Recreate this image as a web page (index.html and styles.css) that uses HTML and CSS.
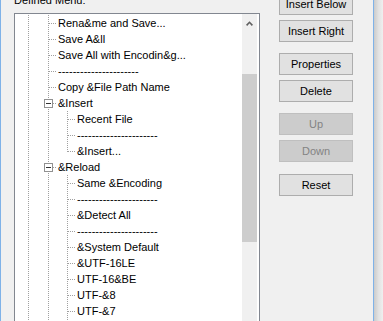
FILE: index.html
```html
<!DOCTYPE html>
<html>
<head>
<meta charset="utf-8">
<link rel="stylesheet" href="styles.css">
</head>
<body>
<div class="screen">
  <div class="window">
    <div class="left">
      <div class="label">Defined Menu:</div>
      <div class="tree">
        <div class="tree-items">
          <div class="row"><span class="a"></span><span class="b tee"></span><span class="t">Rena&amp;me and Save...</span></div>
          <div class="row"><span class="a"></span><span class="b tee"></span><span class="t">Save A&amp;ll</span></div>
          <div class="row"><span class="a"></span><span class="b tee"></span><span class="t">Save All with Encodin&amp;g...</span></div>
          <div class="row"><span class="a"></span><span class="b tee"></span><span class="t">----------------------</span></div>
          <div class="row"><span class="a"></span><span class="b tee"></span><span class="t">Copy &amp;File Path Name</span></div>
          <div class="row"><span class="a"></span><span class="b node"><span class="box"></span></span><span class="t">&amp;Insert</span></div>
          <div class="row"><span class="a"></span><span class="b pipe"></span><span class="c tee"></span><span class="t">Recent File</span></div>
          <div class="row"><span class="a"></span><span class="b pipe"></span><span class="c tee"></span><span class="t">----------------------</span></div>
          <div class="row"><span class="a"></span><span class="b pipe"></span><span class="c last"></span><span class="t">&amp;Insert...</span></div>
          <div class="row"><span class="a"></span><span class="b node"><span class="box"></span></span><span class="t">&amp;Reload</span></div>
          <div class="row"><span class="a"></span><span class="b pipe"></span><span class="c tee"></span><span class="t">Same &amp;Encoding</span></div>
          <div class="row"><span class="a"></span><span class="b pipe"></span><span class="c tee"></span><span class="t">----------------------</span></div>
          <div class="row"><span class="a"></span><span class="b pipe"></span><span class="c tee"></span><span class="t">&amp;Detect All</span></div>
          <div class="row"><span class="a"></span><span class="b pipe"></span><span class="c tee"></span><span class="t">----------------------</span></div>
          <div class="row"><span class="a"></span><span class="b pipe"></span><span class="c tee"></span><span class="t">&amp;System Default</span></div>
          <div class="row"><span class="a"></span><span class="b pipe"></span><span class="c tee"></span><span class="t">&amp;UTF-16LE</span></div>
          <div class="row"><span class="a"></span><span class="b pipe"></span><span class="c tee"></span><span class="t">UTF-16&amp;BE</span></div>
          <div class="row"><span class="a"></span><span class="b pipe"></span><span class="c tee"></span><span class="t">UTF-&amp;8</span></div>
          <div class="row"><span class="a"></span><span class="b pipe"></span><span class="c tee"></span><span class="t">UTF-&amp;7</span></div>
          <div class="row"><span class="a"></span><span class="b pipe"></span><span class="c tee"></span><span class="t">&amp;Others</span></div>
        </div>
        <div class="vscroll">
          <div class="sb-up"><svg width="7" height="5" viewBox="0 0 7 5"><polyline points="0.6,4.4 3.5,1.3 6.4,4.4" fill="none" stroke="#606060" stroke-width="1.6"/></svg></div>
          <div class="sb-track"><div class="sb-thumb"></div></div>
        </div>
      </div>
    </div>
    <div class="buttons">
      <button class="btn">Insert Below</button>
      <button class="btn">Insert Right</button>
      <button class="btn gap">Properties</button>
      <button class="btn">Delete</button>
      <button class="btn gap" disabled>Up</button>
      <button class="btn" disabled>Down</button>
      <button class="btn gap2">Reset</button>
    </div>
  </div>
  <div class="shadow"></div>
</div>
</body>
</html>
```
FILE: styles.css
```css
html, body {
  margin: 0;
  height: 100%;
  overflow: hidden;
  background: #f0f0f0;
}
body {
  font-family: "Liberation Sans", Arial, sans-serif;
  font-size: 11px;
  color: #000;
}
.screen {
  display: flex;
  height: 321px;
  overflow: hidden;
}
.window {
  display: flex;
  flex: none;
  width: 372px;
  height: 360px;
  margin-top: -16px;
  padding-top: 8px;
  box-sizing: border-box;
  border-left: 1px solid #7fb2e8;
  border-right: 1px solid #7fb2e8;
  background: #f0f0f0;
  box-sizing: content-box;
}
.shadow {
  width: 9px;
  flex: none;
  background: linear-gradient(to right, #cbcbcb, #e2e2e2 50%, #efefef);
}
.left {
  display: flex;
  flex-direction: column;
  padding-left: 13px;
}
.label {
  height: 16px;
  line-height: 16px;
  margin-bottom: 5px;
  white-space: nowrap;
}
.tree {
  display: flex;
  width: 246px;
  height: 340px;
  box-sizing: border-box;
  border: 1px solid #828790;
  background: #fff;
  padding-right: 2px;
}
.tree-items {
  flex: 1;
  padding-top: 1px;
  overflow: hidden;
}
.row {
  display: flex;
  height: 16px;
  line-height: 16px;
  white-space: nowrap;
}
.a, .b, .c { flex: none; height: 16px; }
.a {
  width: 23px;
  background: repeating-linear-gradient(to bottom, #a0a0a0 0 1px, transparent 1px 2px) 13px 0 / 1px 100% no-repeat;
}
.b { width: 20px; }
.b.tee {
  background:
    repeating-linear-gradient(to bottom, #a0a0a0 0 1px, transparent 1px 2px) 10px 0 / 1px 100% no-repeat,
    repeating-linear-gradient(to right, #a0a0a0 0 1px, transparent 1px 2px) 11px 8px / 8px 1px no-repeat;
}
.b.pipe {
  background: repeating-linear-gradient(to bottom, #a0a0a0 0 1px, transparent 1px 2px) 10px 0 / 1px 100% no-repeat;
}
.b.node {
  display: flex;
  align-items: flex-start;
  background:
    repeating-linear-gradient(to bottom, #a0a0a0 0 1px, transparent 1px 2px) 10px 0 / 1px 100% no-repeat,
    repeating-linear-gradient(to right, #a0a0a0 0 1px, transparent 1px 2px) 15px 8px / 4px 1px no-repeat;
}
.box {
  width: 9px;
  height: 9px;
  box-sizing: border-box;
  margin: 4px 0 0 6px;
  border: 1px solid #919191;
  background: linear-gradient(#333, #333) center / 5px 1px no-repeat, #fff;
}
.c { width: 19px; }
.c.tee {
  background:
    repeating-linear-gradient(to bottom, #a0a0a0 0 1px, transparent 1px 2px) 9px 0 / 1px 100% no-repeat,
    repeating-linear-gradient(to right, #a0a0a0 0 1px, transparent 1px 2px) 10px 8px / 8px 1px no-repeat;
}
.c.last {
  background:
    repeating-linear-gradient(to bottom, #a0a0a0 0 1px, transparent 1px 2px) 9px 0 / 1px 9px no-repeat,
    repeating-linear-gradient(to right, #a0a0a0 0 1px, transparent 1px 2px) 10px 8px / 8px 1px no-repeat;
}
.t { color: #000; }
.vscroll {
  width: 15px;
  flex: none;
  display: flex;
  flex-direction: column;
  background: #f0f0f0;
}
.sb-up {
  height: 17px;
  display: flex;
  justify-content: center;
  align-items: flex-start;
  padding-top: 7px;
  box-sizing: border-box;
}
.sb-up svg { display: block; }
.sb-track { flex: 1; }
.sb-thumb {
  margin-top: 43px;
  height: 168px;
  background: #cdcdcd;
}
.buttons {
  display: flex;
  flex-direction: column;
  margin-left: 19px;
  padding-top: 1px;
  width: 74px;
}
.btn {
  height: 22px;
  box-sizing: border-box;
  margin: 5px 0 0;
  padding: 0;
  border: 1px solid #adadad;
  background: #e1e1e1;
  font-family: "Liberation Sans", Arial, sans-serif;
  font-size: 11px;
  color: #000;
  border-radius: 0;
}
.btn:first-child { margin-top: 0; }
.btn.gap { margin-top: 11px; }
.btn.gap2 { margin-top: 12px; }
.btn:disabled {
  background: #cccccc;
  border-color: #bfbfbf;
  color: #838383;
}
```
